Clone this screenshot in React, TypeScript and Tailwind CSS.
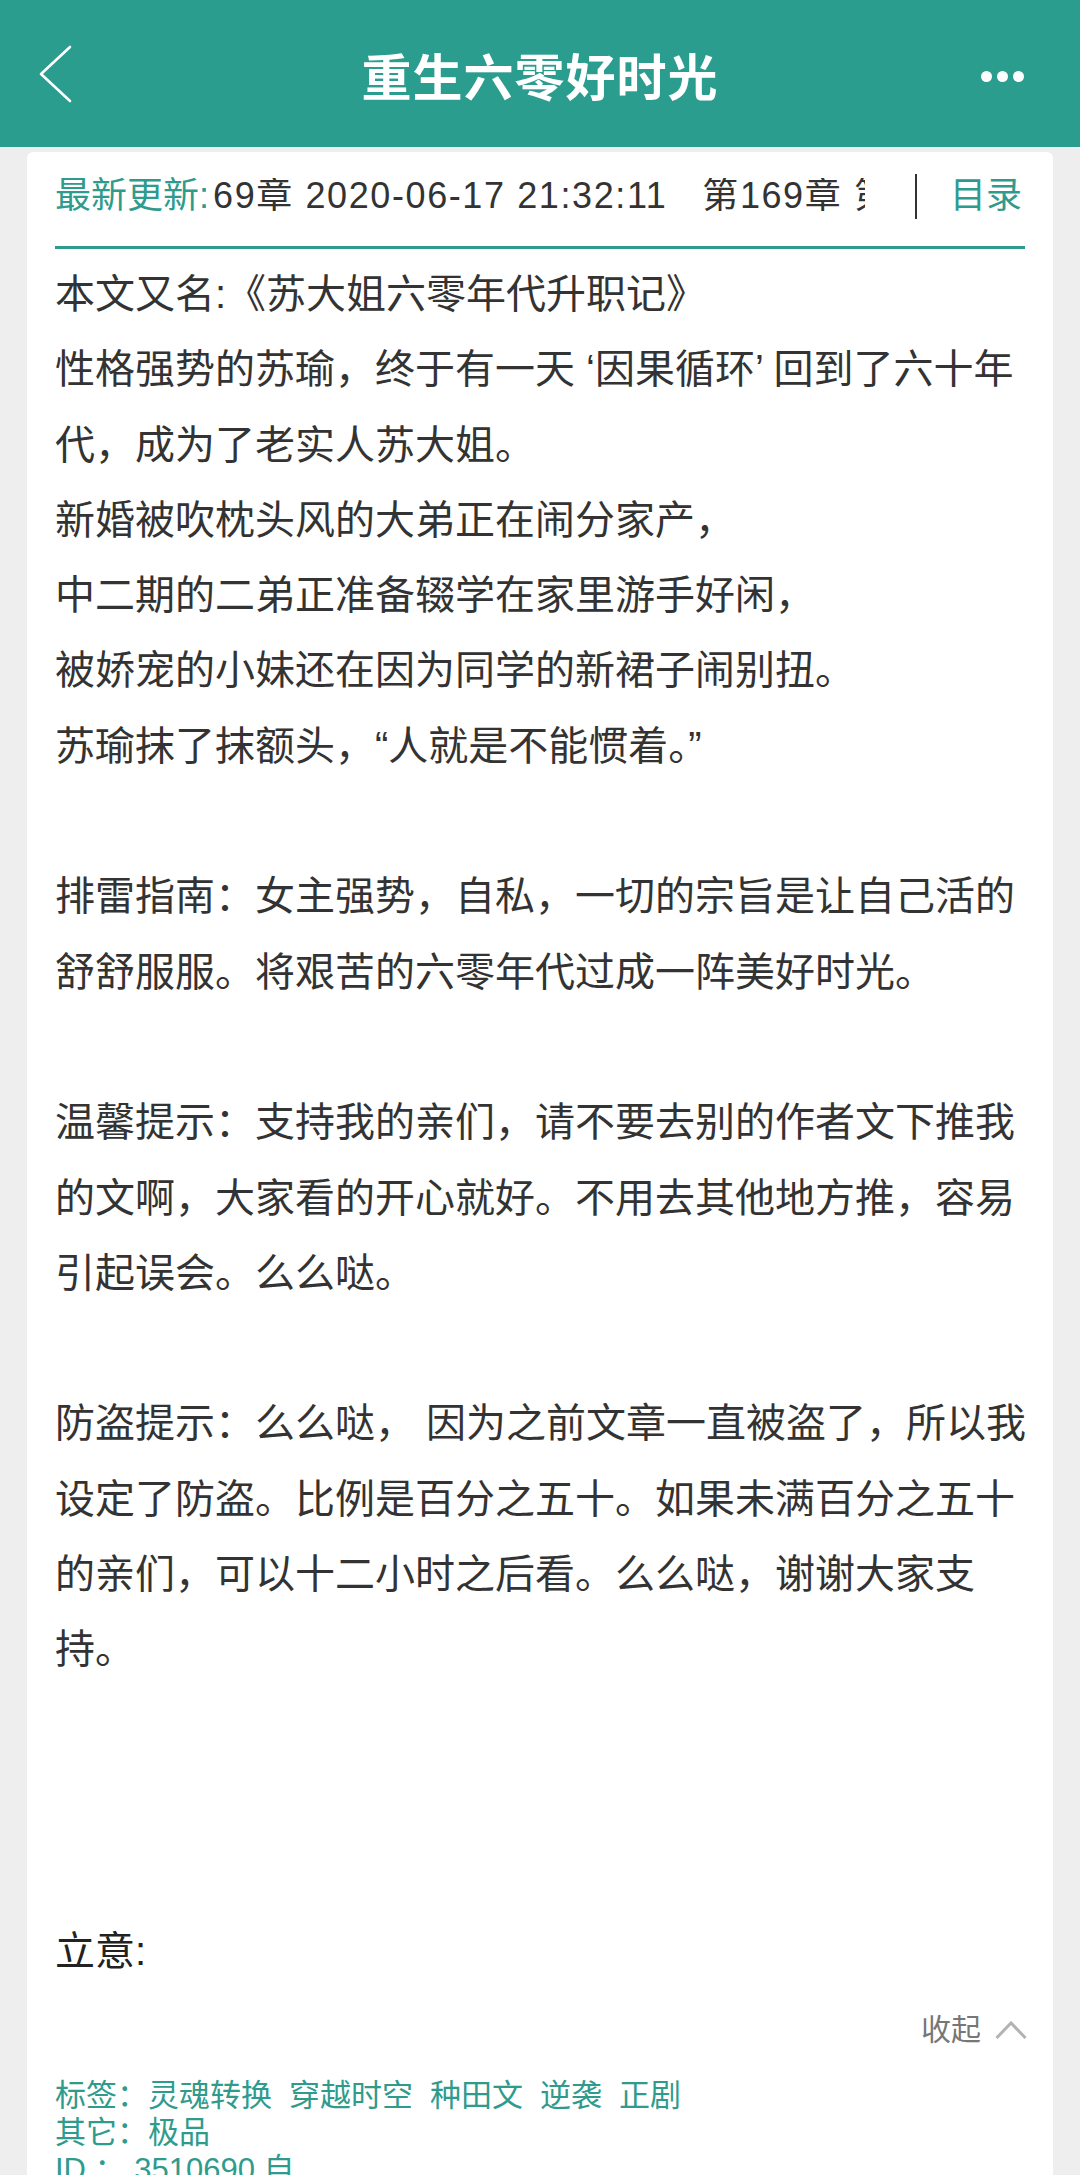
import React from "react";

const bodyLines: string[] = [
  "本文又名:《苏大姐六零年代升职记》",
  "性格强势的苏瑜，终于有一天 ‘因果循环’ 回到了六十年",
  "代，成为了老实人苏大姐。",
  "新婚被吹枕头风的大弟正在闹分家产，",
  "中二期的二弟正准备辍学在家里游手好闲，",
  "被娇宠的小妹还在因为同学的新裙子闹别扭。",
  "苏瑜抹了抹额头，“人就是不能惯着。”",
  "",
  "排雷指南：女主强势，自私，一切的宗旨是让自己活的",
  "舒舒服服。将艰苦的六零年代过成一阵美好时光。",
  "",
  "温馨提示：支持我的亲们，请不要去别的作者文下推我",
  "的文啊，大家看的开心就好。不用去其他地方推，容易",
  "引起误会。么么哒。",
  "",
  "防盗提示：么么哒， 因为之前文章一直被盗了，所以我",
  "设定了防盗。比例是百分之五十。如果未满百分之五十",
  "的亲们，可以十二小时之后看。么么哒，谢谢大家支",
  "持。",
  "",
  "",
  "",
];

const tags = ["灵魂转换", "穿越时空", "种田文", "逆袭", "正剧"];

export default function App() {
  return (
    <div className="min-h-[2175px] w-[1080px] bg-[#eeeeee] flex flex-col font-['Liberation_Sans','Noto_Sans_CJK_SC',sans-serif] overflow-hidden">
      {/* Header */}
      <header className="h-[147px] bg-[#2a9d8f] flex items-center shrink-0">
        <div className="w-[140px] pl-[38px] flex items-center">
          <svg width="36" height="60" viewBox="0 0 36 60" fill="none">
            <polyline
              points="32,3 3,30 32,57"
              stroke="#ffffff"
              strokeWidth="2.6"
              strokeLinecap="round"
              strokeLinejoin="round"
            />
          </svg>
        </div>
        <div className="flex-1 text-center text-white text-[50px] font-semibold leading-none mt-[10px] tracking-[1px]">
          重生六零好时光
        </div>
        <div className="w-[140px] pr-[56px] flex items-center justify-end gap-[5px] mt-[6px]">
          <span className="w-[11px] h-[11px] rounded-full bg-white" />
          <span className="w-[11px] h-[11px] rounded-full bg-white" />
          <span className="w-[11px] h-[11px] rounded-full bg-white" />
        </div>
      </header>

      {/* Card */}
      <main className="flex-1 mx-[27px] mt-[5px] bg-white rounded-t-[6px] px-[28px] flex flex-col">
        {/* Update row */}
        <div className="h-[88px] flex items-center">
          <span className="text-[36px] text-[#2f9b8d] whitespace-nowrap leading-none">最新更新:</span>
          <div className="flex-1 overflow-hidden whitespace-nowrap">
            <span className="inline-block ml-[4px] text-[36px] text-[#333333] leading-none tracking-[1.6px]">
              69章 2020-06-17 21:32:11&nbsp;&nbsp;&nbsp;第169章 第一百六十九章
            </span>
          </div>
          <span className="ml-[50px] w-[2px] h-[45px] bg-[#333333]" />
          <span className="ml-[33px] mr-[3px] text-[36px] text-[#2f9b8d] leading-none whitespace-nowrap">目录</span>
        </div>
        <div className="h-[3px] bg-[#2f9b8d] mt-[6px]" />

        {/* Body */}
        <div className="mt-[8px] text-[40px] text-[#333333]">
          {bodyLines.map((line, i) => (
            <div key={i} className="h-[75.3px] leading-[75.3px] whitespace-nowrap">
              {line || "\u00a0"}
            </div>
          ))}
          <div className="h-[75.3px] leading-[75.3px] whitespace-nowrap text-[#222222]">立意:</div>
        </div>

        {/* Collapse */}
        <div className="mt-[21px] h-[40px] flex items-center justify-end">
          <span className="text-[30px] text-[#777777] leading-none">收起</span>
          <svg className="ml-[14px] mr-[-2px]" width="32" height="18" viewBox="0 0 32 18" fill="none">
            <polyline
              points="1.5,17 16,2 30.5,17"
              stroke="#b3b3b3"
              strokeWidth="3"
              strokeLinejoin="miter"
            />
          </svg>
        </div>

        {/* Meta */}
        <div className="mt-[27px] text-[31px] text-[#2f9b8d] leading-[37px]">
          <div className="flex whitespace-nowrap">
            <span>标签：</span>
            <span className="flex gap-[17px]">
              {tags.map((t) => (
                <span key={t}>{t}</span>
              ))}
            </span>
          </div>
          <div className="whitespace-nowrap">其它：极品</div>
          <div className="whitespace-nowrap">ID ： 3510690 自</div>
        </div>
      </main>
    </div>
  );
}
